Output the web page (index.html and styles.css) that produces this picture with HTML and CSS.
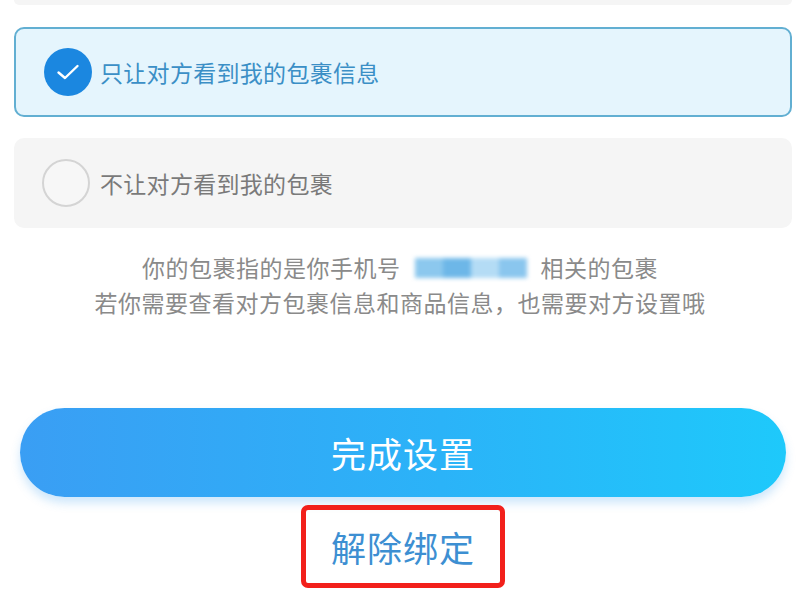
FILE: index.html
```html
<!DOCTYPE html>
<html>
  <head>
    <meta charset="utf-8" />
    <title>包裹共享设置</title>
    <meta name="viewport" content="width=device-width, initial-scale=1" />
    <link rel="stylesheet" href="styles.css">
  </head>
  <body>
    <div class="page">
      <div class="card-tail"></div>

      <div class="option option-on">
        <span class="radio radio-on">
          <svg width="24" height="18" viewBox="0 0 24 18">
            <path d="M2.5 9.5 L9 15 L21.5 3" fill="none" stroke="#ffffff" stroke-width="2.4" stroke-linecap="round" stroke-linejoin="round" />
          </svg>
        </span>
        <span class="option-text">只让对方看到我的包裹信息</span>
      </div>

      <div class="option option-off">
        <span class="radio radio-off"></span>
        <span class="option-text">不让对方看到我的包裹</span>
      </div>

      <div class="tips">
        <p>你的包裹指的是你手机号<span class="phone"><i></i><i></i><i></i><i></i></span>相关的包裹</p>
        <p>若你需要查看对方包裹信息和商品信息，也需要对方设置哦</p>
      </div>

      <button class="btn-done">完成设置</button>

      <div class="unbind-wrap">
        <a class="unbind">解除绑定</a>
      </div>
    </div>
  </body>
</html>
```

FILE: styles.css
```css
html,
body {
  margin: 0;
  background: #ffffff;
}
body {
  font-family: "Noto Sans CJK SC", "Noto Sans", sans-serif;
}
.page {
  width: 800px;
  height: 600px;
  overflow: hidden;
}
.card-tail {
  height: 5px;
  margin: 0 8px 0 14px;
  background: #f5f5f5;
  border-radius: 0 0 10px 10px;
}
.option {
  display: flex;
  align-items: center;
  box-sizing: border-box;
  height: 90px;
  margin: 0 8px 0 14px;
  padding-left: 28px;
  border-radius: 10px;
}
.option-on {
  margin-top: 22px;
  background: #e5f5fd;
  border: 2px solid #62afd2;
}
.option-off {
  margin-top: 21px;
  background: #f5f5f5;
  padding-left: 28px;
}
.radio {
  box-sizing: border-box;
  width: 48px;
  height: 48px;
  border-radius: 50%;
  display: flex;
  align-items: center;
  justify-content: center;
  flex-shrink: 0;
}
.radio-on {
  background: #1b87e0;
}
.radio-off {
  border: 2px solid #d4d4d4;
  background: #f7f7f7;
}
.option-text {
  margin-left: 8px;
  font-size: 23px;
  letter-spacing: 0.3px;
}
.option-off .option-text {
  margin-left: 10px;
  color: #7a7a7a;
}
.option-on .option-text {
  color: #3b8fc6;
}
.tips {
  margin-top: 22px;
  text-align: center;
  color: #8a8a8a;
  font-size: 23px;
  letter-spacing: 0.5px;
  line-height: 35px;
}
.tips p {
  margin: 0;
}
.phone {
  display: inline-flex;
  vertical-align: middle;
  width: 140px;
  height: 22px;
  justify-content: center;
  filter: blur(2px);
  margin-top: -4px;
}
.phone i {
  display: block;
  width: 28px;
  height: 20px;
  background: #8cc8ee;
}
.phone i:nth-child(2) {
  background: #6db7e8;
}
.phone i:nth-child(3) {
  background: #b4dcf5;
}
.phone i:nth-child(4) {
  background: #8ac6ee;
}
.btn-done {
  display: block;
  box-sizing: border-box;
  width: 766px;
  height: 89px;
  margin: 88px 0 0 20px;
  border: none;
  border-radius: 45px;
  background: linear-gradient(90deg, #3a9ef4 0%, #2bb3f8 55%, #1ec9fb 100%);
  box-shadow: 0 6px 10px rgba(60, 160, 240, 0.25);
  color: #ffffff;
  font-family: inherit;
  font-size: 35px;
  letter-spacing: 1px;
}
.unbind-wrap {
  display: flex;
  justify-content: center;
  margin-top: 8px;
}
.unbind {
  box-sizing: border-box;
  width: 204px;
  height: 83px;
  margin-left: 6px;
  display: flex;
  align-items: center;
  justify-content: center;
  border: 5px solid #f2201b;
  border-radius: 7px;
  color: #3d8fd2;
  font-size: 35px;
  letter-spacing: 1px;
}
```
